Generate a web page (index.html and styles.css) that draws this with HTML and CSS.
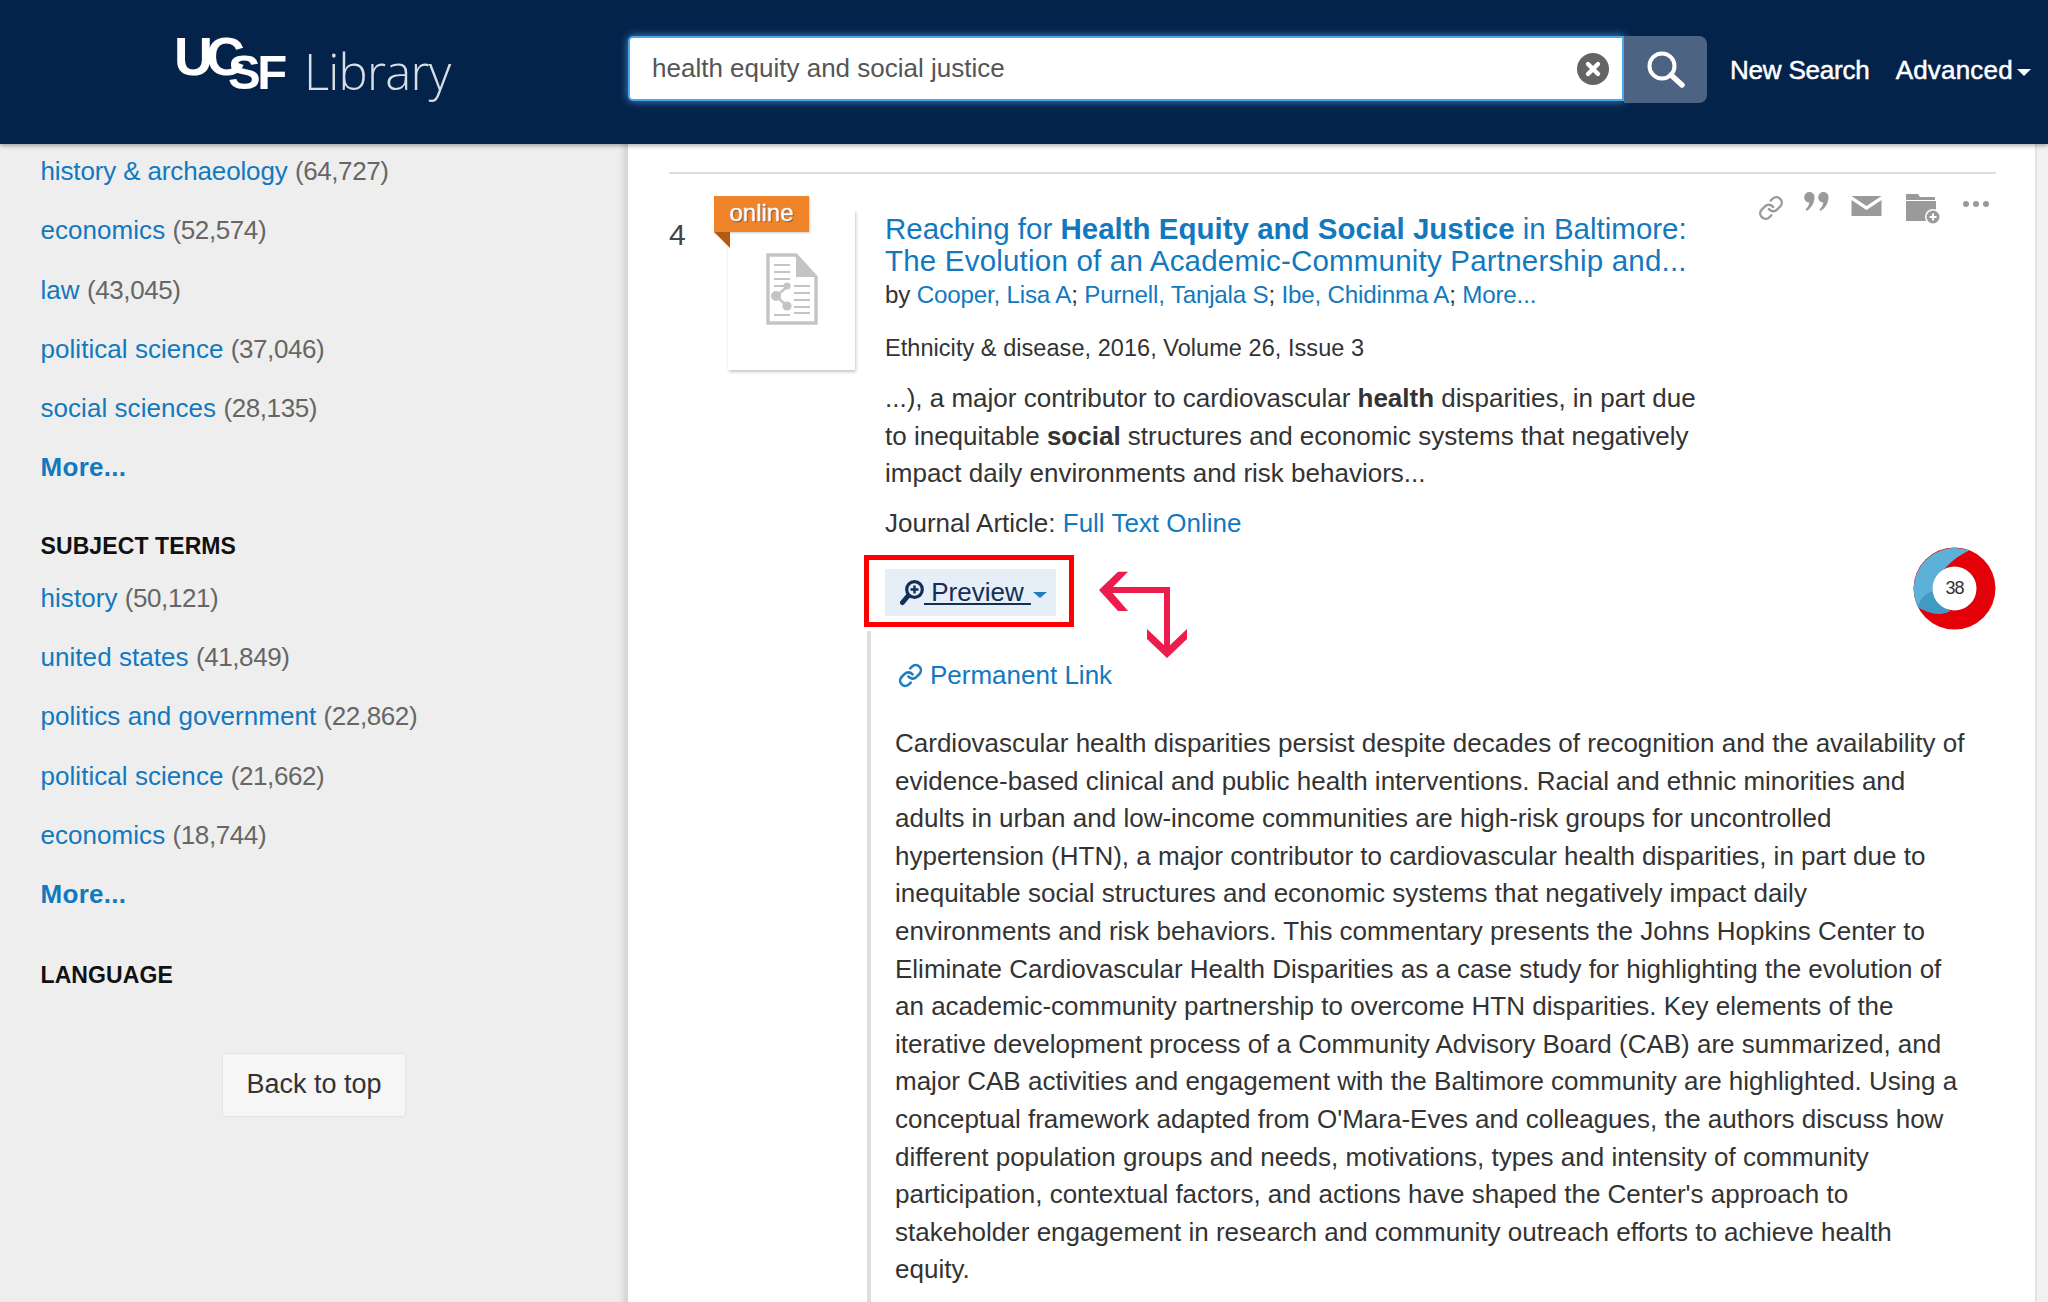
FILE: index.html
```html
<!DOCTYPE html>
<html lang="en">
<head>
<meta charset="utf-8">
<title>UCSF Library</title>
<link rel="stylesheet" href="styles.css">
</head>
<body>
<div class="app">
  <header class="topbar">
    <div class="logo"><span class="logo-uc">UC</span><span class="logo-sf">SF</span><span class="logo-lib">Library</span></div>
    <div class="search">
      <div class="search-input">
        <span class="search-text">health equity and social justice</span>
        <svg class="clear" viewBox="0 0 32 32"><circle cx="16" cy="16" r="16" fill="#646464"/><path d="M11 11l10 10M21 11L11 21" stroke="#fff" stroke-width="4.4" stroke-linecap="round"/></svg>
      </div>
      <div class="search-btn"><svg viewBox="0 0 40 40" class="search-ico"><circle cx="16" cy="16" r="12.5" fill="none" stroke="#fff" stroke-width="4"/><path d="M25 25l11 10" stroke="#fff" stroke-width="5.5" stroke-linecap="round"/></svg></div>
    </div>
    <nav class="nav"><span>New Search</span><span class="nav-adv">Advanced<i class="caret"></i></span></nav>
  </header>
  <div class="body">
    <aside class="side">
      <ul class="facets first">
        <li><a class="tight">history &amp; archaeology</a> <span class="cnt">(64,727)</span></li>
        <li><a>economics</a> <span class="cnt">(52,574)</span></li>
        <li><a>law</a> <span class="cnt">(43,045)</span></li>
        <li><a>political science</a> <span class="cnt">(37,046)</span></li>
        <li><a>social sciences</a> <span class="cnt">(28,135)</span></li>
        <li><a class="more">More...</a></li>
      </ul>
      <h3 class="side-h">SUBJECT TERMS</h3>
      <ul class="facets">
        <li><a>history</a> <span class="cnt">(50,121)</span></li>
        <li><a>united states</a> <span class="cnt">(41,849)</span></li>
        <li><a>politics and government</a> <span class="cnt">(22,862)</span></li>
        <li><a>political science</a> <span class="cnt">(21,662)</span></li>
        <li><a>economics</a> <span class="cnt">(18,744)</span></li>
        <li><a class="more">More...</a></li>
      </ul>
      <h3 class="side-h lang">LANGUAGE</h3>
      <div class="top-wrap"><button class="top-btn">Back to top</button></div>
    </aside>
    <main class="main">
      <div class="rule"></div>
      <article class="result">
        <div class="num">4</div>
        <div class="thumb">
          <span class="badge">online</span>
          <svg class="doc" viewBox="0 0 52 72"><path d="M2 2h28l20 22v46H2z" fill="#fff" stroke="#c4c4c4" stroke-width="3.4"/><path d="M30 2l20 22H30z" fill="#c4c4c4"/><path d="M8 12h16M8 19h16M8 26h16M8 33h12M28 33h16M28 40h16M28 47h16M28 54h16M28 60h16M8 62h16" stroke="#c4c4c4" stroke-width="2"/><path d="M21 34L10 43l11 10" fill="none" stroke="#c4c4c4" stroke-width="2.5"/><circle cx="10" cy="43" r="5" fill="#c4c4c4"/><circle cx="21" cy="33" r="3.6" fill="#c4c4c4"/><circle cx="21" cy="53" r="4.6" fill="#c4c4c4"/></svg>
        </div>
        <div class="info">
          <h2 class="title">Reaching for <b>Health Equity and Social Justice</b> in Baltimore:<br><span class="title-2">The Evolution of an Academic-Community Partnership and...</span></h2>
          <p class="authors">by <a>Cooper, Lisa A</a>; <a>Purnell, Tanjala S</a>; <a>Ibe, Chidinma A</a>; <a>More...</a></p>
          <p class="source">Ethnicity &amp; disease, 2016, Volume 26, Issue 3</p>
          <p class="snippet">...), a major contributor to cardiovascular <b>health</b> disparities, in part due<br>to inequitable <b>social</b> structures and economic systems that negatively<br>impact daily environments and risk behaviors...</p>
          <p class="format">Journal Article: <a>Full Text Online</a></p>
          <div class="actions">
            <span class="preview"><svg class="zoom-ico" viewBox="0 0 24 26"><circle cx="14.5" cy="9.500" r="7.800" fill="none" stroke="#132f56" stroke-width="3.2"/><path d="M10.500 9.500h8M14.500 5.500v8" stroke="#132f56" stroke-width="2.400"/><path d="M8 16l-5.500 6.500" stroke="#132f56" stroke-width="5" stroke-linecap="round"/></svg><span class="preview-t"> Preview </span><i class="caret blue"></i></span>
            <svg class="arrows" viewBox="0 0 100 95"><polygon points="4,24 23,5.700 33,5.700 15,24 33,45 23,45" fill="#ec1c4c"/><rect x="10" y="21" width="65" height="6" fill="#ec1c4c"/><rect x="69" y="21" width="6" height="64" fill="#ec1c4c"/><polygon points="52,63 72,82 92,63 92,73 72,92 52,73" fill="#ec1c4c"/></svg>
          </div>
          <div class="detail">
            <p class="perma"><svg class="link-ico" viewBox="0 0 24 24"><path d="M10 13a5 5 0 0 0 7.540.540l3-3a5 5 0 0 0-7.070-7.070l-1.720 1.710M14 11a5 5 0 0 0-7.540-.540l-3 3a5 5 0 0 0 7.070 7.070l1.710-1.710" fill="none" stroke="#1b7fc1" stroke-width="2.500" stroke-linecap="round"/></svg><a>Permanent Link</a></p>
            <p class="abstract">Cardiovascular health disparities persist despite decades of recognition and the availability of<br>evidence-based clinical and public health interventions. Racial and ethnic minorities and<br>adults in urban and low-income communities are high-risk groups for uncontrolled<br>hypertension (HTN), a major contributor to cardiovascular health disparities, in part due to<br>inequitable social structures and economic systems that negatively impact daily<br>environments and risk behaviors. This commentary presents the Johns Hopkins Center to<br>Eliminate Cardiovascular Health Disparities as a case study for highlighting the evolution of<br>an academic-community partnership to overcome HTN disparities. Key elements of the<br>iterative development process of a Community Advisory Board (CAB) are summarized, and<br>major CAB activities and engagement with the Baltimore community are highlighted. Using a<br>conceptual framework adapted from O'Mara-Eves and colleagues, the authors discuss how<br>different population groups and needs, motivations, types and intensity of community<br>participation, contextual factors, and actions have shaped the Center's approach to<br>stakeholder engagement in research and community outreach efforts to achieve health<br>equity.</p>
          </div>
        </div>
        <div class="tools">
          <svg class="tool t-link" viewBox="0 0 24 24"><path d="M10 13a5 5 0 0 0 7.540.540l3-3a5 5 0 0 0-7.070-7.070l-1.720 1.710M14 11a5 5 0 0 0-7.540-.540l-3 3a5 5 0 0 0 7.070 7.070l1.710-1.710" fill="none" stroke="#9a9a9a" stroke-width="2.200" stroke-linecap="round"/></svg>
          <svg class="tool t-quote" viewBox="0 0 26 24"><path d="M5.500 1a5 5 0 0 1 5 5c0 6-3 11-8 14l-1-1.500c2-2 3.300-4 3.800-7A5 5 0 0 1 5.500 1zM19.500 1a5 5 0 0 1 5 5c0 6-3 11-8 14l-1-1.500c2-2 3.300-4 3.800-7a5 5 0 0 1 .2-10.500z" fill="#9a9a9a"/></svg>
          <svg class="tool t-mail" viewBox="0 0 30 20"><path d="M0 0h30L15 10zM0 4l15 10L30 4v16H0z" fill="#9a9a9a"/></svg>
          <svg class="tool t-folder" viewBox="0 0 36 34"><path d="M1 3h12l2 3H30v3H1zM1 10h30v20H1z" fill="#9a9a9a"/><circle cx="28" cy="26" r="8" fill="#fff"/><circle cx="28" cy="26" r="6.500" fill="#9a9a9a"/><path d="M24.500 26h7M28 22.500v7" stroke="#fff" stroke-width="2"/></svg>
          <svg class="tool t-more" viewBox="0 0 28 8"><circle cx="4" cy="4" r="3" fill="#9a9a9a"/><circle cx="14" cy="4" r="3" fill="#9a9a9a"/><circle cx="24" cy="4" r="3" fill="#9a9a9a"/></svg>
        </div>
        <div class="donut">
          <svg viewBox="0 0 83 83"><circle cx="41.500" cy="41.500" r="41" fill="#e40008"/><path d="M56 3.500A41 41 0 0 0 5 60C13 65 27 70 37 64C24 60 19 48 23 36C26 26 38 12 56 3.500z" fill="#5cb1d8"/><path d="M5 60C13 65 27 70 37 64C28 60 22 52 21 44C12 46 7 52 5 60z" fill="#3f9bc4"/><circle cx="41.500" cy="41.500" r="22" fill="#fff"/></svg>
          <span class="donut-n">38</span>
        </div>
      </article>
    </main>
    <div class="gutter"></div>
  </div>
</div>
</body>
</html>
```
FILE: styles.css
```css
* { box-sizing: border-box; }
html, body { margin: 0; height: 100%; }
body { font-family: "Liberation Sans", Arial, sans-serif; color: #333; overflow: hidden; background: #fff; }
a { color: #1279bf; }
p, h2, h3, ul { margin: 0; padding: 0; }
.app { height: 1302px; display: flex; flex-direction: column; overflow: hidden; }

.topbar { height: 144px; flex: none; background: #03234b; display: flex; align-items: flex-start; box-shadow: 0 2px 4px rgba(0,0,0,.3); position: relative; z-index: 2; }
.logo { width: 628px; height: 144px; flex: none; color: #fff; position: relative; }
.logo-uc, .logo-sf, .logo-lib { position: absolute; white-space: nowrap; }
.logo-uc { left: 174px; top: 26px; font-size: 54px; line-height: 60px; font-weight: 700; letter-spacing: -7px; }
.logo-sf { left: 228px; top: 45px; font-size: 49px; line-height: 54px; font-weight: 700; letter-spacing: -3.500px; }
.logo-lib { left: 304px; top: 41px; font-family: "Open Sans", sans-serif; font-weight: 300; font-size: 49px; line-height: 60px; letter-spacing: -.8px; color: #d7dee6; }

.search { display: flex; margin-top: 36px; height: 66px; }
.search-input { width: 996px; height: 65px; background: #fff; border: 2px solid #4ba6ea; border-radius: 5px 0 0 5px; box-shadow: 0 0 8px rgba(90,170,240,.8); display: flex; align-items: center; justify-content: space-between; padding: 0 13px 0 22px; }
.search-text { font-size: 26px; color: #555; }
.clear { width: 32px; height: 32px; }
.search-btn { width: 83px; height: 67px; background: #4d6383; border-radius: 0 8px 8px 0; display: flex; align-items: center; justify-content: center; }
.search-ico { width: 40px; height: 40px; }
.nav { display: flex; color: #fff; font-size: 26px; margin-top: 52px; margin-left: 23px; line-height: 36px; letter-spacing: -.2px; -webkit-text-stroke: .5px #fff; }
.nav-adv { margin-left: 26px; display: flex; align-items: center; letter-spacing: .2px; }
.caret { display: inline-block; width: 0; height: 0; border-left: 7px solid transparent; border-right: 7px solid transparent; border-top: 7px solid #fff; margin-left: 4px; margin-top: 4px; }
.caret.blue { border-left-width: 7px; border-right-width: 7px; border-top: 6px solid #1b7fc1; margin: 4px 0 0 2px; }

.body { flex: 1; display: flex; min-height: 0; }
.side { width: 628px; flex: none; background: #eee; box-shadow: inset -8px 0 5px -3px #d4d4d4; padding: 0 0 0 40.500px; font-size: 26px; color: #666; }
.facets { list-style: none; }
.facets.first { margin-top: -2px; }
.facets li { height: 59.300px; line-height: 59.300px; white-space: nowrap; letter-spacing: .05px; }
.facets a.tight { letter-spacing: -.14px; }
.cnt { letter-spacing: -.4px; }
.facets a.more { color: #1279bf; font-weight: 700; letter-spacing: .3px; }
.side-h { font-size: 23px; line-height: 30px; color: #111; font-weight: 700; margin-top: 33px; margin-bottom: 8px; letter-spacing: .1px; }
.side-h.lang { margin-top: 35px; margin-bottom: 0; }
.top-wrap { margin-top: 63px; padding-left: 181.500px; }
.top-btn { width: 184px; height: 64px; background: #f6f6f6; border: 1px solid #e4e4e4; border-radius: 3px; font: 27px "Liberation Sans", Arial, sans-serif; color: #333; padding: 0; }

.main { width: 1407px; flex: none; padding: 28px 39px 0 41px; background: #fff; }
.rule { height: 2px; background: #ddd; }
.result { display: flex; position: relative; padding-top: 36px; }
.num { width: 59px; flex: none; font-size: 30px; line-height: 34px; margin-top: 8px; color: #444; }
.thumb { width: 127px; height: 160px; flex: none; background: #fff; box-shadow: 1px 2px 3px rgba(0,0,0,.22); position: relative; display: flex; justify-content: center; align-items: flex-start; }
.badge { position: absolute; left: -14px; top: -14px; width: 95px; height: 36px; background: #f0842a; color: #fff; font-size: 24px; line-height: 34px; text-align: center; text-shadow: 1px 1px 1px #555; box-shadow: 1px 1px 2px rgba(0,0,0,.2); -webkit-text-stroke: .3px #fff; }
.badge::after { content: ""; position: absolute; left: 0; top: 36px; border-top: 16px solid #b35a10; border-left: 16px solid transparent; }
.doc { width: 52px; height: 72px; margin-top: 43px; }
.info { margin-left: 30px; margin-top: 3px; width: 1080px; flex: none; }
.title { font-size: 29.500px; line-height: 32px; font-weight: 400; color: #1279bf; white-space: nowrap; }
.title-2 { letter-spacing: .2px; }
.authors { font-size: 24.200px; line-height: 32px; margin-top: 2px; white-space: nowrap; letter-spacing: -.2px; }
.source { font-size: 23.500px; line-height: 32px; margin-top: 21px; white-space: nowrap; color: #333; letter-spacing: .05px; }
.snippet { font-size: 26px; line-height: 37.700px; margin-top: 16px; white-space: nowrap; }
.format { font-size: 26px; line-height: 36px; margin-top: 12px; }
.actions { position: relative; height: 47px; margin-top: 28px; }
.preview { display: inline-flex; align-items: center; width: 171px; height: 47px; background: #e6eef8; padding-left: 15px; font-size: 26px; color: #132f56; position: relative; }
.preview::before { content: ""; position: absolute; top: -14px; bottom: -11px; left: -21px; right: -18px; border: 5px solid #f00; }
.zoom-ico { width: 24px; height: 26px; flex: none; }
.preview-t { text-decoration: underline; white-space: pre; }
.arrows { position: absolute; left: 210px; top: -3px; width: 100px; height: 95px; overflow: visible; }
.detail { margin: 15px 0 0 -18px; border-left: 4px solid #ddd; padding: 26px 0 120px 23px; width: 1100px; }
.perma { font-size: 26px; line-height: 36px; display: flex; align-items: center; margin-left: 4px; }
.link-ico { width: 25px; height: 25px; margin-right: 7px; }
.abstract { font-size: 26px; line-height: 37.600px; margin-top: 32px; white-space: nowrap; margin-left: 1px; }
.tools { position: absolute; right: 0; top: 3px; left: 0; height: 40px; pointer-events: none; }
.tool { position: absolute; }
.t-link { left: 1089px; top: 18px; width: 26px; height: 26px; }
.t-quote { left: 1135px; top: 14px; width: 26px; height: 24px; }
.t-mail { left: 1182px; top: 19px; width: 31px; height: 20px; }
.t-folder { left: 1235px; top: 14px; width: 38px; height: 34px; }
.t-more { left: 1293px; top: 23px; width: 28px; height: 8px; }
.donut { position: absolute; left: 1244px; top: 373px; width: 83px; height: 83px; }
.donut svg { width: 83px; height: 83px; display: block; }
.donut-n { position: absolute; inset: 0; display: flex; align-items: center; justify-content: center; font-size: 18px; letter-spacing: -1px; color: #333; }
.gutter { flex: 1; background: #f1f1f1; border-left: 2px solid #e4e4e4; }
```
